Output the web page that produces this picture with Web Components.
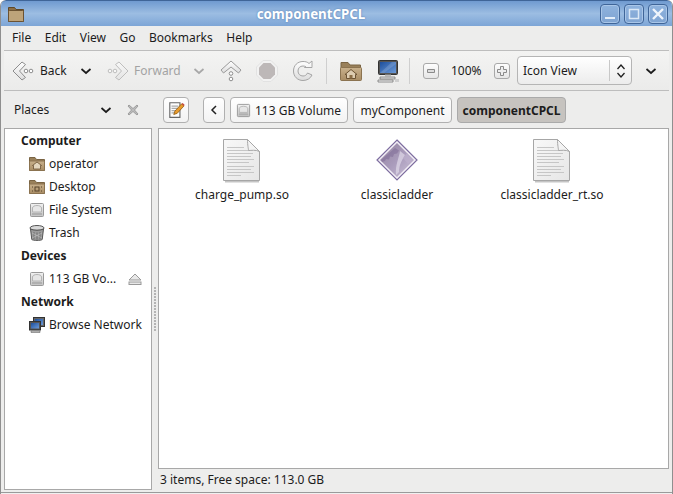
<!DOCTYPE html>
<html>
<head>
<meta charset="utf-8">
<title>componentCPCL</title>
<style>
   html, body { margin: 0; padding: 0; height: 100%; background: #fff; }
   body { font-family: "Noto Sans", sans-serif; font-size: 12px; color: #1c1c1c; }
</style>
</head>
<body>
<fm-window>
   <fm-titlebar slot="title">componentCPCL</fm-titlebar>
   <fm-menubar slot="menu">
      <span>File</span><span>Edit</span><span>View</span><span>Go</span><span>Bookmarks</span><span>Help</span>
   </fm-menubar>
   <fm-toolbar slot="tools"></fm-toolbar>
   <fm-places slot="side"></fm-places>
   <fm-pathbar slot="path"></fm-pathbar>
   <fm-iconview slot="main">
      <fm-file icon="doc">charge_pump.so</fm-file>
      <fm-file icon="diamond">classicladder</fm-file>
      <fm-file icon="doc">classicladder_rt.so</fm-file>
   </fm-iconview>
   <span slot="status">3 items, Free space: 113.0 GB</span>
</fm-window>

<script>
const defs = `
   <defs>
      <linearGradient id="fold" x1="0" y1="0" x2="0" y2="1"><stop offset="0" stop-color="#c9b18c"/><stop offset="1" stop-color="#a88c64"/></linearGradient>
      <linearGradient id="disk" x1="0" y1="0" x2="0" y2="1"><stop offset="0" stop-color="#f2f2f2"/><stop offset="1" stop-color="#c4c4c4"/></linearGradient>
      <linearGradient id="page" x1="0" y1="0" x2="1" y2="1"><stop offset="0" stop-color="#f8f8f8"/><stop offset="1" stop-color="#e6e6e6"/></linearGradient>
      <linearGradient id="mauve" x1="0" y1="0" x2="1" y2="1"><stop offset="0" stop-color="#94849f"/><stop offset=".5" stop-color="#a99bbb"/><stop offset="1" stop-color="#cbc1d8"/></linearGradient>
      <linearGradient id="screen" x1="0" y1="0" x2="1" y2="1"><stop offset="0" stop-color="#1d4f9c"/><stop offset="1" stop-color="#6c9ad8"/></linearGradient>
      <linearGradient id="shine" x1="0" y1="0" x2="0" y2="1"><stop offset="0" stop-color="#fff"/><stop offset="1" stop-color="#dcdcdc"/></linearGradient>
   </defs>`;

const doc_lines = [9, 12, 15, 18, 21, 24, 28, 31, 34, 37].map((y, i) =>
   `<path d="M9 ${y}.5h${[17, 22, 26, 24, 27, 22, 27, 24, 27, 14][i]}" stroke="#c6c6c6"/>`).join('');

const icons = {
   back: [24, 24, `<path d="M2 12L11 3l3.500 2.500L8.500 12l6 6.500L11 21z" fill="url(#shine)" stroke="#8d8d8d" stroke-linejoin="round"/><circle cx="15" cy="12" r="1.800" fill="#fff" stroke="#8d8d8d"/><circle cx="20" cy="12" r="1.800" fill="#fff" stroke="#8d8d8d"/>`],
   forward: [24, 24, `<g opacity=".5"><path d="M22 12L13 3 9.500 5.500 15.500 12l-6 6.500L13 21z" fill="url(#shine)" stroke="#8d8d8d" stroke-linejoin="round"/><circle cx="9" cy="12" r="1.800" fill="#fff" stroke="#8d8d8d"/><circle cx="4" cy="12" r="1.800" fill="#fff" stroke="#8d8d8d"/></g>`],
   up: [24, 24, `<path d="M12 2l10 9-2.500 3L12 8l-7.500 6L2 11z" fill="url(#shine)" stroke="#9a9a9a" stroke-linejoin="round"/><circle cx="12" cy="14.500" r="1.800" fill="#fff" stroke="#8d8d8d"/><circle cx="12" cy="20" r="1.800" fill="#fff" stroke="#8d8d8d"/>`],
   stop: [24, 24, `<path d="M8 1.500h8L22.500 8v8L16 22.500H8L1.500 16V8z" fill="#f2f2f2" stroke="#e2e2e2"/><path d="M8.500 4h7L20 8.500v7L15.500 20h-7L4 15.500v-7z" fill="#bdb8b8"/>`],
   reload: [24, 24, `<path d="M21 7.500V2l-3 2.500C16.500 3 14.500 2.500 12 2.500 6.500 2.500 2.500 6.500 2.500 12s4 9.500 9.500 9.500c4 0 7.500-2 9-5.500l-4.500-2c-.8 2-2.500 3-4.500 3-3 0-5-2-5-5s2-5 5-5c1.200 0 2.200.3 3 1L13.500 8.500h7.500z" fill="url(#shine)" stroke="#a5a5a5" stroke-linejoin="round"/>`],
   home: [24, 24, `<path d="M2 3.500h7l2 2.500h10.500v15H2z" fill="#99805a" stroke="#7a6443"/><rect x="1.500" y="8.500" width="21" height="13" rx="1" fill="url(#fold)" stroke="#8b7350"/><path d="M12 10.500l6 5h-1.500v4h-9v-4H6z" fill="#ddccb0" stroke="#6b5232"/><rect x="10.500" y="16" width="3" height="3.500" fill="#8a6d45"/>`],
   computer: [24, 24, `<rect x="2.500" y="1.500" width="19" height="14" rx="1" fill="#555" stroke="#333"/><path d="M4 3h16v11H4z" fill="url(#screen)"/><path d="M4 14L16 3h4v2L8 14z" fill="#fff" opacity=".15"/><path d="M9 15.500h6v2H9z" fill="#bbb"/><path d="M4 18h15v2H4z" fill="#e2e2e2" stroke="#777" stroke-width=".8"/><path d="M2 21h15v2H2z" fill="#f0f0f0" stroke="#777" stroke-width=".8"/><rect x="19" y="20" width="4" height="3" fill="#cfcfcf"/>`],
   note: [16, 16, `<path d="M2.500 1.500h9v13h-9z" fill="#fdfdfd" stroke="#666"/><path d="M4 4.500h6M4 6.500h6M4 8.500h4M4 10.500h3" stroke="#aaa"/><path d="M6 12l1-3 6-6.500 2 2-6 6.500z" fill="#e89b2c" stroke="#8f5a12" stroke-width=".7"/><path d="M13 2.500l2 2 .7-1-1.700-1.800z" fill="#c8413a"/>`],
   disk: [16, 16, `<rect x="1.500" y="1.500" width="13" height="13" rx="1" fill="url(#disk)" stroke="#999"/><path d="M3.500 10V6c0-1.500 2-2.500 4.500-2.500s4.500 1 4.500 2.500v4z" fill="#e6e6e6" stroke="#b4b4b4"/><rect x="3" y="11" width="10" height="2" fill="#b0b0b0"/>`],
   user: [16, 16, `<path d="M.5 1.500h5.500l1.500 2h8v11H.5z" fill="#99805a" stroke="#7a6443"/><rect x=".5" y="5" width="15" height="9.500" rx="1" fill="url(#fold)" stroke="#8b7350"/><path d="M8 6l4.500 3.500h-1v3.500h-7V9.500h-1z" fill="#e4d6bd" stroke="#6b5232" stroke-width=".8"/>`],
   desk: [16, 16, `<path d="M.5 1.500h5.500l1.500 2h8v11H.5z" fill="#99805a" stroke="#7a6443"/><rect x=".5" y="5" width="15" height="9.500" rx="1" fill="url(#fold)" stroke="#8b7350"/><rect x="6" y="8" width="4" height="4" fill="none" stroke="#57432a"/><path d="M3 8h1M3 12h1M12 8h1M12 12h1" stroke="#57432a"/>`],
   trash: [16, 16, `<ellipse cx="8" cy="3" rx="7" ry="2.500" fill="#d8d8d8" stroke="#555"/><path d="M1.500 4l1.300 10.500c1.200 1.200 9.200 1.200 10.400 0L14.500 4c-2.500 1.600-10.500 1.600-13 0z" fill="#9c9c9c" stroke="#555"/><path d="M5 7v7M8 7.500v7M11 7v7" stroke="#6e6e6e"/><path d="M3 8l10 5M13 8L3 13" stroke="#c4c4c4" stroke-width=".6"/>`],
   network: [16, 16, `<rect x="4.500" y=".5" width="11" height="9" fill="#666" stroke="#333"/><rect x="6" y="2" width="8" height="6" fill="url(#screen)"/><rect x=".5" y="4.500" width="11" height="8.500" fill="#555" stroke="#333"/><rect x="2" y="6" width="8" height="5.500" fill="url(#screen)"/><path d="M2 14h9v1.500H2z" fill="#ccc" stroke="#666" stroke-width=".6"/>`],
   eject: [16, 16, `<path d="M8 3l6 6H2z" fill="#e8e8e8" stroke="#999"/><rect x="2" y="11" width="12" height="2.500" fill="#e8e8e8" stroke="#999"/>`],
   close: [12, 12, `<path d="M2 1l4 3.500L10 1l1 1-3.500 4L11 10l-1 1-4-3.500L2 11l-1-1 3.500-4L1 2z" fill="#bcbcbc" stroke="#888" stroke-width=".7"/>`],
   caret: [12, 12, `<path d="M1.500 4L6 8l4.500-4" fill="none" stroke="currentColor" stroke-width="1.700"/>`],
   doc: [48, 48, `<path d="M7 43.500h34" stroke="#555" stroke-width="2" opacity=".35"/><path d="M5.500 1.500h24l12 12v29h-36z" fill="url(#page)" stroke="#a6a6a6"/>${doc_lines}<path d="M29.500 1.500c0 6 1 9 1 11 3 0 7-1 11 1z" fill="#f4f4f4" stroke="#a6a6a6"/>`],
   diamond: [48, 48, `<path d="M24 2L44 22 24 42 4 22z" fill="#f3eff6" stroke="#7d6d9f" stroke-width="1.200"/><path d="M24 5L41 22 24 39 7 22z" fill="url(#mauve)"/><path d="M9 24l3-1 1-2 3 .5 1-3 3 .5 1-3 3-.5 2-3-4-2.500L8 22z" fill="#7f6c98" opacity=".55"/><path d="M27 13c-1 7-5 14-4 24l3-3c0-7 3-12 6-17z" fill="#dcd5e6" opacity=".75"/><path d="M34 15l5 7-4 4-5-6z" fill="#bdb0cd" opacity=".7"/>`],
};

class FmIcon extends HTMLElement
{
   connectedCallback()
   {
      const [w, h, body] = icons[this.getAttribute('name')];
      const size = this.getAttribute('size') || w;
      const shadow = this.attachShadow({ mode: 'open' });
      shadow.innerHTML = `
         <style>
            :host { display: inline-flex; flex: none; }
            svg { display: block; }
         </style>
         <svg width="${size}" height="${size}" viewBox="0 0 ${w} ${h}" fill="none">${defs}${body}</svg>`;
   }
}
customElements.define('fm-icon', FmIcon);

const window_template = document.createElement('template');
window_template.innerHTML = `
   <style>
      :host {
         display: flex;
         flex-direction: column;
         height: 494px;
         width: 673px;
         box-sizing: border-box;
         background: #ededec;
         border: 1px solid #8f8f8f;
         border-width: 0 1px;
         border-radius: 6px 6px 0 0;
         overflow: hidden;
      }
      .panes {
         display: flex;
         flex: 1;
         min-height: 0;
         padding: 0 3px 2px;
      }
      .side { display: flex; flex: none; width: 148px; }
      .grip {
         flex: none;
         width: 6px;
         display: flex;
         align-items: center;
         justify-content: center;
         padding-top: 37px;
         box-sizing: border-box;
      }
      .grip i {
         display: block;
         width: 3px;
         height: 44px;
         background: radial-gradient(circle at 1px 1px, #b4b4b4 1px, transparent 1px) 0 0 / 3px 3px;
      }
      .right { flex: 1; display: flex; flex-direction: column; min-width: 0; }
      .status { height: 21px; flex: none; padding-left: 2px; line-height: 22px; }
      .foot { height: 1px; flex: none; border-top: 1px solid #9a9a9a; background: #f0f0f0; }
   </style>
   <slot name="title"></slot>
   <slot name="menu"></slot>
   <slot name="tools"></slot>
   <div class="panes">
      <div class="side"><slot name="side"></slot></div>
      <div class="grip"><i></i></div>
      <div class="right">
         <slot name="path"></slot>
         <slot name="main"></slot>
         <div class="status"><slot name="status"></slot></div>
      </div>
   </div>
   <div class="foot"></div>
`;
class FmWindow extends HTMLElement
{
   connectedCallback()
   {
      this.attachShadow({ mode: 'open' }).appendChild(window_template.content.cloneNode(true));
   }
}
customElements.define('fm-window', FmWindow);

const titlebar_template = document.createElement('template');
titlebar_template.innerHTML = `
   <style>
      :host {
         display: flex;
         align-items: center;
         height: 26px;
         flex: none;
         margin: 0 -1px;
         padding: 0 5px 0 7px;
         box-sizing: border-box;
         background: linear-gradient(#6f9ad0, #9cbde2 50%, #7da5d6);
         border-top: 1px solid #3f6598;
         border-radius: 6px 6px 0 0;
      }
      .title {
         flex: 1;
         text-align: center;
         color: #fff;
         font-weight: 700;
         font-size: 13.300px;
         padding-right: 3px;
         text-shadow: 0 0 2px #4f78ad;
      }
      .btns { display: flex; gap: 4px; }
      .btn {
         width: 20px;
         height: 20px;
         box-sizing: border-box;
         border: 1px solid #3f6598;
         border-radius: 4px;
         background: linear-gradient(#8fb3de, #7fa4d2);
         display: flex;
         align-items: center;
         justify-content: center;
         box-shadow: inset 0 0 0 1px #a9c6e8;
      }
   </style>
   <svg width="18" height="18" viewBox="0 0 18 18">
      <path d="M1.500 2.500h6l1.500 2h7.500v12h-15z" fill="#8a6d45" stroke="#5e4726"/>
      <rect x="1.500" y="5.500" width="15" height="11" rx="1" fill="#bda37a" stroke="#6b5232"/>
   </svg>
   <div class="title"><slot></slot></div>
   <div class="btns">
      <div class="btn"><svg width="14" height="14"><path d="M2 11h10" stroke="#e4eef9" stroke-width="2"/></svg></div>
      <div class="btn"><svg width="14" height="14"><rect x="2.500" y="2.500" width="9" height="9" fill="none" stroke="#dbe8f6" stroke-width="1.500"/></svg></div>
      <div class="btn"><svg width="14" height="14"><path d="M2 2l10 10M12 2L2 12" stroke="#eef4fb" stroke-width="2.400"/></svg></div>
   </div>
`;
class FmTitlebar extends HTMLElement
{
   connectedCallback()
   {
      this.attachShadow({ mode: 'open' }).appendChild(titlebar_template.content.cloneNode(true));
   }
}
customElements.define('fm-titlebar', FmTitlebar);

const menubar_template = document.createElement('template');
menubar_template.innerHTML = `
   <style>
      :host {
         display: flex;
         flex: none;
         height: 25px;
         box-sizing: border-box;
         align-items: center;
         gap: 13.500px;
         padding: 0 0 2px 8px;
         margin: 0 3px;
         border-bottom: 1px solid #bdbdbd;
      }
   </style>
   <slot></slot>
`;
class FmMenubar extends HTMLElement
{
   connectedCallback()
   {
      this.attachShadow({ mode: 'open' }).appendChild(menubar_template.content.cloneNode(true));
   }
}
customElements.define('fm-menubar', FmMenubar);

const toolbar_template = document.createElement('template');
toolbar_template.innerHTML = `
   <style>
      :host {
         display: flex;
         flex: none;
         align-items: center;
         height: 40px;
         box-sizing: border-box;
         margin: 0 3px;
         padding-left: 7px;
         border-bottom: 1px solid #bdbdbd;
         background: linear-gradient(#f3f3f2, #ebebea);
      }
      .label { margin-left: 4px; }
      .off { color: #a3a3a3; }
      .sep { width: 1px; height: 26px; background: #cfcfcf; flex: none; }
      fm-icon { color: #1c1c1c; }
      .caret { color: #1c1c1c; }
      .off.caret { color: #a8a8a8; }
      .mini {
         width: 14px;
         height: 14px;
         border: 1px solid #a8a8a8;
         border-radius: 3px;
         background: linear-gradient(#fdfdfd, #e6e6e6);
         display: flex;
         align-items: center;
         justify-content: center;
         flex: none;
      }
      .combo {
         width: 115px;
         height: 29px;
         box-sizing: border-box;
         display: flex;
         align-items: center;
         border: 1px solid #b5b5b5;
         border-radius: 4px;
         background: linear-gradient(#fff, #ececec);
         padding-left: 5px;
         flex: none;
      }
      .combo span { flex: 1; }
      .combo b { width: 1px; height: 21px; background: #c8c8c8; }
      .combo svg { margin: 0 5px 0 6px; }
   </style>
   <fm-icon name="back"></fm-icon>
   <span class="label" style="margin-left:5px;width:31px">Back</span>
   <fm-icon class="caret" name="caret" style="margin-left:9px"></fm-icon>
   <fm-icon name="forward" style="margin-left:14px"></fm-icon>
   <span class="label off" style="width:48px">Forward</span>
   <fm-icon class="off caret" name="caret" style="margin-left:11px"></fm-icon>
   <fm-icon name="up" style="margin-left:14px"></fm-icon>
   <fm-icon name="stop" style="margin-left:12px"></fm-icon>
   <fm-icon name="reload" style="margin-left:12px"></fm-icon>
   <div class="sep" style="margin-left:11px"></div>
   <fm-icon name="home" style="margin-left:12px"></fm-icon>
   <fm-icon name="computer" style="margin-left:13px"></fm-icon>
   <div class="sep" style="margin-left:9px"></div>
   <div class="mini" style="margin-left:13px"><svg width="8" height="8"><path d="M.5 2.500h7v3h-7z" fill="#ddd" stroke="#8a8a8a"/></svg></div>
   <span style="margin-left:12px;width:31px">100%</span>
   <div class="mini" style="margin-left:12px"><svg width="10" height="10"><path d="M3.500.5h3v3h3v3h-3v3h-3v-3h-3v-3h3z" fill="#eee" stroke="#8a8a8a"/></svg></div>
   <div class="combo" style="margin-left:7px">
      <span>Icon View</span><b></b>
      <svg width="10" height="16"><path d="M1.500 6L5 2l3.500 4M1.500 10L5 14l3.500-4" fill="none" stroke="#222" stroke-width="1.300"/></svg>
   </div>
   <fm-icon class="caret" name="caret" style="margin-left:13px"></fm-icon>
`;
class FmToolbar extends HTMLElement
{
   connectedCallback()
   {
      this.attachShadow({ mode: 'open' }).appendChild(toolbar_template.content.cloneNode(true));
   }
}
customElements.define('fm-toolbar', FmToolbar);

const pathbar_template = document.createElement('template');
pathbar_template.innerHTML = `
   <style>
      :host {
         display: flex;
         flex: none;
         align-items: center;
         height: 37px;
         padding: 1px 0 0 5px;
         box-sizing: border-box;
      }
      .btn {
         height: 26px;
         box-sizing: border-box;
         display: flex;
         align-items: center;
         gap: 4px;
         border: 1px solid #b0b0b0;
         border-radius: 4px;
         background: linear-gradient(#fff, #f3f3f3);
         flex: none;
      }
      .on { background: #c6c3bf; font-weight: 700; border-color: #aaa; }
   </style>
   <div class="btn" style="width:26px;justify-content:center"><fm-icon name="note" size="18"></fm-icon></div>
   <div class="btn" style="width:22px;margin:0 5px 0 14px;justify-content:center">
      <svg width="8" height="10"><path d="M6 1L2 5l4 4" fill="none" stroke="#222" stroke-width="1.500"/></svg>
   </div>
   <div class="btn" style="width:118px;padding-left:5px"><fm-icon name="disk" size="15"></fm-icon>113 GB Volume</div>
   <div class="btn" style="width:99px;margin-left:5px;justify-content:center">myComponent</div>
   <div class="btn on" style="width:109px;margin-left:5px;justify-content:center">componentCPCL</div>
`;
class FmPathbar extends HTMLElement
{
   connectedCallback()
   {
      this.attachShadow({ mode: 'open' }).appendChild(pathbar_template.content.cloneNode(true));
   }
}
customElements.define('fm-pathbar', FmPathbar);

const places_template = document.createElement('template');
places_template.innerHTML = `
   <style>
      :host {
         display: flex;
         flex-direction: column;
         flex: 1;
         min-width: 0;
      }
      .top { height: 37px; flex: none; display: flex; align-items: center; padding: 0 13px 0 10px; }
      .top span { flex: 1; }
      .list { flex: 1; background: #fff; border: 1px solid #a8a8a8; }
      .head { height: 23px; line-height: 23px; padding-left: 16px; font-weight: 700; }
      .item { height: 23px; display: flex; align-items: center; gap: 4px; padding-left: 24px; white-space: nowrap; }
      .item span { flex: none; }
      .item fm-icon[name=eject] { margin-left: auto; margin-right: 8px; }
   </style>
   <div class="top">
      <span>Places</span>
      <fm-icon name="caret"></fm-icon>
      <fm-icon name="close" style="margin-left:15px"></fm-icon>
   </div>
   <div class="list">
      <div class="head">Computer</div>
      <div class="item"><fm-icon name="user"></fm-icon><span>operator</span></div>
      <div class="item"><fm-icon name="desk"></fm-icon><span>Desktop</span></div>
      <div class="item"><fm-icon name="disk"></fm-icon><span>File System</span></div>
      <div class="item"><fm-icon name="trash"></fm-icon><span>Trash</span></div>
      <div class="head">Devices</div>
      <div class="item"><fm-icon name="disk"></fm-icon><span>113 GB Vo...</span><fm-icon name="eject"></fm-icon></div>
      <div class="head">Network</div>
      <div class="item"><fm-icon name="network"></fm-icon><span>Browse Network</span></div>
   </div>
`;
class FmPlaces extends HTMLElement
{
   connectedCallback()
   {
      this.attachShadow({ mode: 'open' }).appendChild(places_template.content.cloneNode(true));
   }
}
customElements.define('fm-places', FmPlaces);

const iconview_template = document.createElement('template');
iconview_template.innerHTML = `
   <style>
      :host {
         display: grid;
         flex: 1;
         min-height: 0;
         grid-template-columns: repeat(3, 155px);
         grid-auto-rows: max-content;
         padding: 9px 0 0 5.500px;
         background: #fff;
         border: 1px solid #a8a8a8;
      }
   </style>
   <slot></slot>
`;
class FmIconview extends HTMLElement
{
   connectedCallback()
   {
      this.attachShadow({ mode: 'open' }).appendChild(iconview_template.content.cloneNode(true));
   }
}
customElements.define('fm-iconview', FmIconview);

const file_template = document.createElement('template');
file_template.innerHTML = `
   <style>
      :host {
         display: flex;
         flex-direction: column;
         align-items: center;
         text-align: center;
      }
   </style>
   <fm-icon></fm-icon>
   <div><slot></slot></div>
`;
class FmFile extends HTMLElement
{
   connectedCallback()
   {
      const shadow = this.attachShadow({ mode: 'open' });
      const content = file_template.content.cloneNode(true);
      content.querySelector('fm-icon').setAttribute('name', this.getAttribute('icon'));
      shadow.appendChild(content);
   }
}
customElements.define('fm-file', FmFile);
</script>
</body>
</html>
